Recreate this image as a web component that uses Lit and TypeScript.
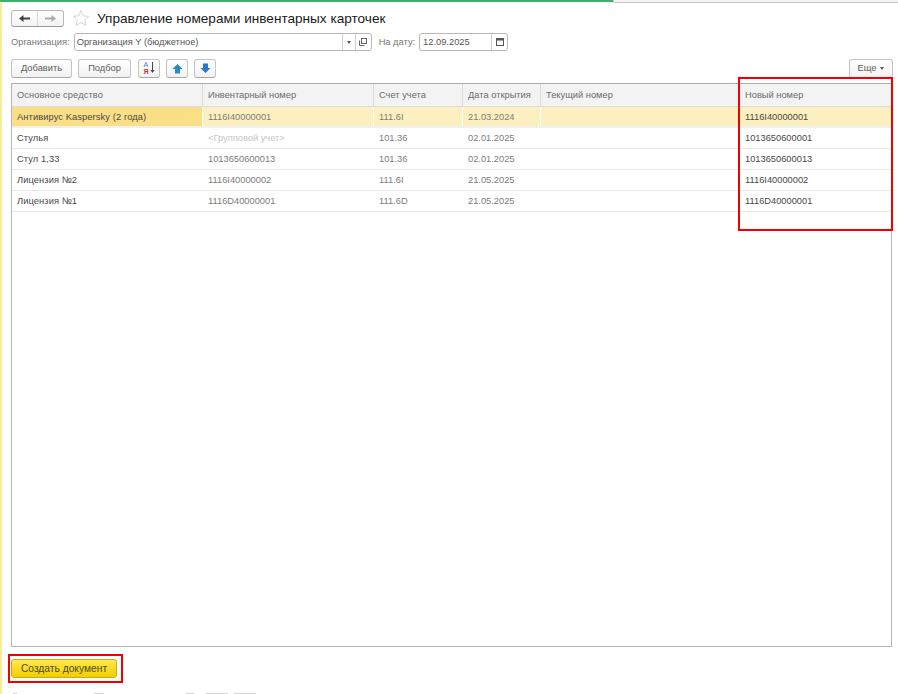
import {LitElement, html, css, svg} from "lit";
import {customElement} from "lit/decorators.js";

const columns = [
  {title: "Основное средство", width: 191},
  {title: "Инвентарный номер", width: 171},
  {title: "Счет учета", width: 89},
  {title: "Дата открытия", width: 78},
  {title: "Текущий номер", width: 199},
  {title: "Новый номер", width: 0},
];

const rows = [
  ["Антивирус Kaspersky (2 года)", "1116I40000001", "111.6I", "21.03.2024", "", "1116I40000001"],
  ["Стулья", "<Групповой учет>", "101.36", "02.01.2025", "", "1013650600001"],
  ["Стул 1,33", "1013650600013", "101.36", "02.01.2025", "", "1013650600013"],
  ["Лицензия №2", "1116I40000002", "111.6I", "21.05.2025", "", "1116I40000002"],
  ["Лицензия №1", "1116D40000001", "111.6D", "21.05.2025", "", "1116D40000001"],
];

// the last line is cut by the window edge in the reference, only glyph tops show
const clippedInk = [
  {gap: 2, width: 4},
  {gap: 77, width: 10},
  {gap: 82, width: 8},
  {gap: 12, width: 22},
  {gap: 6, width: 22},
];

const arrowUp = svg`<path d="M6.5 2 L11.5 7 H9 V11.5 H4 V7 H1.5 Z" fill="#2a8ac4"/>`;
const arrowDown = svg`<path d="M4 1.5 H9 V6 H11.5 L6.5 11 L1.5 6 H4 Z" fill="#2a78c4"/>`;

@customElement("app-root")
export class AppRoot extends LitElement {
  static styles = css`
    :host {
      display: block;
      width: 898px;
      height: 694px;
      overflow: hidden;
      position: relative;
      background: #fff;
      font-family: "Liberation Sans", Arial, sans-serif;
      font-size: 9.3px;
      color: #4b4b4b;
    }
    .topstrip {
      display: flex;
      height: 3px;
    }
    .tab-active {
      width: 613px;
      height: 2px;
      background: #3db26b;
    }
    .tab-rest {
      flex: 1;
      border-left: 1px solid #ccc;
      border-bottom: 1px solid #c8c8c8;
      background: #f4f4f4;
    }
    .page {
      height: 691px;
      box-sizing: border-box;
      padding: 3px 5px 0 9px;
      border-left: 2px solid #f6ec9a;
    }
    .title-row {
      display: flex;
      align-items: center;
      height: 24px;
    }
    .nav {
      display: flex;
      width: 53px;
      height: 17px;
      box-sizing: border-box;
      border: 1px solid #b9b9b9;
      border-bottom-color: #999;
      border-radius: 3px;
      background: linear-gradient(#fff, #f3f3f3);
    }
    .nav span {
      flex: 1;
      display: flex;
      align-items: center;
      justify-content: center;
    }
    .nav span + span {
      border-left: 1px solid #d8d8d8;
    }
    .star {
      margin-left: 8px;
    }
    h1 {
      margin: 0 0 0 7px;
      font-size: 13.6px;
      font-weight: 400;
      color: #1a1a1a;
      white-space: nowrap;
    }
    .form-row {
      display: flex;
      align-items: center;
      height: 18px;
      margin-top: 3px;
    }
    .label {
      color: #777;
      white-space: nowrap;
    }
    .field {
      display: flex;
      align-items: stretch;
      height: 18px;
      box-sizing: border-box;
      border: 1px solid #b8b8b8;
      border-radius: 3px;
      background: #fff;
      color: #555;
    }
    .field .value {
      flex: 1;
      padding-left: 2px;
      line-height: 16px;
      white-space: nowrap;
    }
    .field .cap {
      display: flex;
      align-items: center;
      justify-content: center;
      border-left: 1px solid #cfcfcf;
    }
    .cap-narrow {
      width: 12px;
    }
    .cap-wide {
      width: 15px;
    }
    .org {
      width: 298px;
      margin-left: 4px;
    }
    .date-label {
      margin-left: 7px;
    }
    .date {
      width: 89px;
      margin-left: 4px;
    }
    .date .value {
      padding-left: 3px;
    }
    .toolbar {
      display: flex;
      align-items: center;
      height: 20px;
      margin-top: 7px;
    }
    .btn {
      display: flex;
      align-items: center;
      justify-content: center;
      height: 19px;
      box-sizing: border-box;
      border: 1px solid #c4c4c4;
      border-bottom-color: #a8a8a8;
      border-radius: 3px;
      background: linear-gradient(#fff, #f2f2f2);
      color: #5c5c5c;
      white-space: nowrap;
    }
    .add {
      width: 61px;
    }
    .pick {
      width: 53px;
      margin-left: 6px;
    }
    .icon {
      width: 22px;
    }
    .sort {
      margin-left: 7px;
    }
    .up,
    .down {
      margin-left: 6px;
    }
    .more {
      width: 44px;
      margin-left: auto;
      gap: 4px;
    }
    .caret {
      width: 0;
      height: 0;
      border-left: 2.5px solid transparent;
      border-right: 2.5px solid transparent;
      border-top: 3px solid #555;
    }
    .table {
      margin-top: 5px;
      width: 881px;
      height: 564px;
      box-sizing: border-box;
      border: 1px solid #b5b5b5;
      border-top-color: #adadad;
    }
    .tr {
      display: flex;
      height: 21px;
      box-sizing: border-box;
      border-bottom: 1px solid #e8e8e8;
    }
    .tr.head {
      height: 23px;
      background: #f3f3f3;
      border-bottom: 1px solid #dcdcdc;
    }
    .tr.selected {
      background: #fdf0c0;
      border-bottom: 2px solid #f0f0f0;
    }
    .td {
      box-sizing: border-box;
      padding-left: 5px;
      line-height: 21px;
      white-space: nowrap;
      overflow: hidden;
      color: #7c7c7c;
      border-right: 1px solid transparent;
    }
    .head .td {
      line-height: 23px;
      color: #6c6c6c;
      border-right: 1px solid #dcdcdc;
    }
    .selected .td {
      border-right-color: #fff;
    }
    .selected .td:first-child {
      background: #fbdf86;
    }
    .td:first-child,
    .td:last-child {
      color: #484848;
    }
    .td:first-child {
      letter-spacing: 0.1px;
    }
    .head .td:first-child,
    .head .td:last-child {
      color: #6c6c6c;
    }
    .td:last-child {
      flex: 1;
      border-right: 0;
    }
    .td.muted {
      color: #c6c6c6;
    }
    .footer {
      margin-top: 12px;
    }
    .create {
      width: 106px;
      height: 19px;
      box-sizing: border-box;
      border: 1px solid #c9ae10;
      border-radius: 3px;
      background: linear-gradient(#ffe94d, #f3cf00);
      color: #4f4a1a;
      font-size: 10.25px;
    }
    .status {
      display: flex;
      height: 1px;
      margin-top: 15px;
    }
    .status span {
      height: 1px;
      background: #d6d6d6;
    }
    .mark {
      position: absolute;
      box-sizing: border-box;
      border: 2px solid #f00000;
      pointer-events: none;
    }
    .mark-col {
      left: 738px;
      top: 77px;
      width: 155px;
      height: 154px;
    }
    .mark-btn {
      left: 8px;
      top: 654px;
      width: 115px;
      height: 29px;
    }
  `;

  renderNavArrow(flip: boolean, color: string) {
    return html`<svg width="13" height="9" viewBox="0 0 13 9" style="transform: scaleX(${flip ? -1 : 1})">
      <path d="M1 4.5 L5.5 1 V3.5 H12 V5.5 H5.5 V8 Z" fill=${color}></path>
    </svg>`;
  }

  renderIconButton(cls: string, icon: unknown) {
    return html`<div class="btn icon ${cls}">
      <svg width="13" height="13" viewBox="0 0 13 13">${icon}</svg>
    </div>`;
  }

  render() {
    return html`
      <div class="topstrip">
        <div class="tab-active"></div>
        <div class="tab-rest"></div>
      </div>
      <div class="page">
        <div class="title-row">
          <div class="nav">
            <span>${this.renderNavArrow(false, "#444")}</span>
            <span>${this.renderNavArrow(true, "#aaa")}</span>
          </div>
          <svg class="star" width="18" height="18" viewBox="0 0 18 18">
            <path d="M9 1.5 L11.2 6.8 L17 7.3 L12.6 11 L14 16.6 L9 13.6 L4 16.6 L5.4 11 L1 7.3 L6.8 6.8 Z" fill="#fff" stroke="#d4d4d4"></path>
          </svg>
          <h1>Управление номерами инвентарных карточек</h1>
        </div>
        <div class="form-row">
          <span class="label">Организация:</span>
          <div class="field org">
            <span class="value">Организация Y (бюджетное)</span>
            <span class="cap cap-narrow"><span class="caret"></span></span>
            <span class="cap cap-wide">
              <svg width="10" height="10" viewBox="0 0 10 10" fill="none" stroke="#666">
                <rect x="3.5" y="1.5" width="5" height="5"></rect>
                <path d="M1.5 3.5 V8.5 H6.5"></path>
              </svg>
            </span>
          </div>
          <span class="label date-label">На дату:</span>
          <div class="field date">
            <span class="value">12.09.2025</span>
            <span class="cap cap-wide">
              <svg width="10" height="10" viewBox="0 0 10 10">
                <rect x="1.5" y="1.5" width="7" height="7" fill="#fff" stroke="#555"></rect>
                <rect x="1" y="1" width="8" height="2.5" fill="#555"></rect>
              </svg>
            </span>
          </div>
        </div>
        <div class="toolbar">
          <div class="btn add">Добавить</div>
          <div class="btn pick">Подбор</div>
          <div class="btn icon sort">
            <svg width="15" height="14" viewBox="0 0 15 14">
              <text x="1.5" y="6" font-size="7" font-family="Liberation Sans" fill="#4a80c0">А</text>
              <text x="1.5" y="13" font-size="7" font-weight="700" font-family="Liberation Sans" fill="#c0392b">Я</text>
              <path d="M10.5 1 V10" stroke="#444"></path>
              <path d="M8.5 9 H12.5 L10.5 12 Z" fill="#444"></path>
            </svg>
          </div>
          ${this.renderIconButton("up", arrowUp)}
          ${this.renderIconButton("down", arrowDown)}
          <div class="btn more">Еще <span class="caret"></span></div>
        </div>
        <div class="table">
          <div class="tr head">
            ${columns.map((c) => html`<div class="td" style=${c.width ? `width: ${c.width}px` : ""}>${c.title}</div>`)}
          </div>
          ${rows.map((row, i) => html`
            <div class="tr ${i === 0 ? "selected" : ""}">
              ${row.map((cell, j) => html`<div
                class="td ${cell.startsWith("<") ? "muted" : ""}"
                style=${columns[j].width ? `width: ${columns[j].width}px` : ""}>${cell}</div>`)}
            </div>
          `)}
        </div>
        <div class="footer">
          <div class="btn create">Создать документ</div>
          <div class="status">
            ${clippedInk.map((s) => html`<span style="margin-left: ${s.gap}px; width: ${s.width}px"></span>`)}
          </div>
        </div>
      </div>
      <div class="mark mark-col"></div>
      <div class="mark mark-btn"></div>
    `;
  }
}
